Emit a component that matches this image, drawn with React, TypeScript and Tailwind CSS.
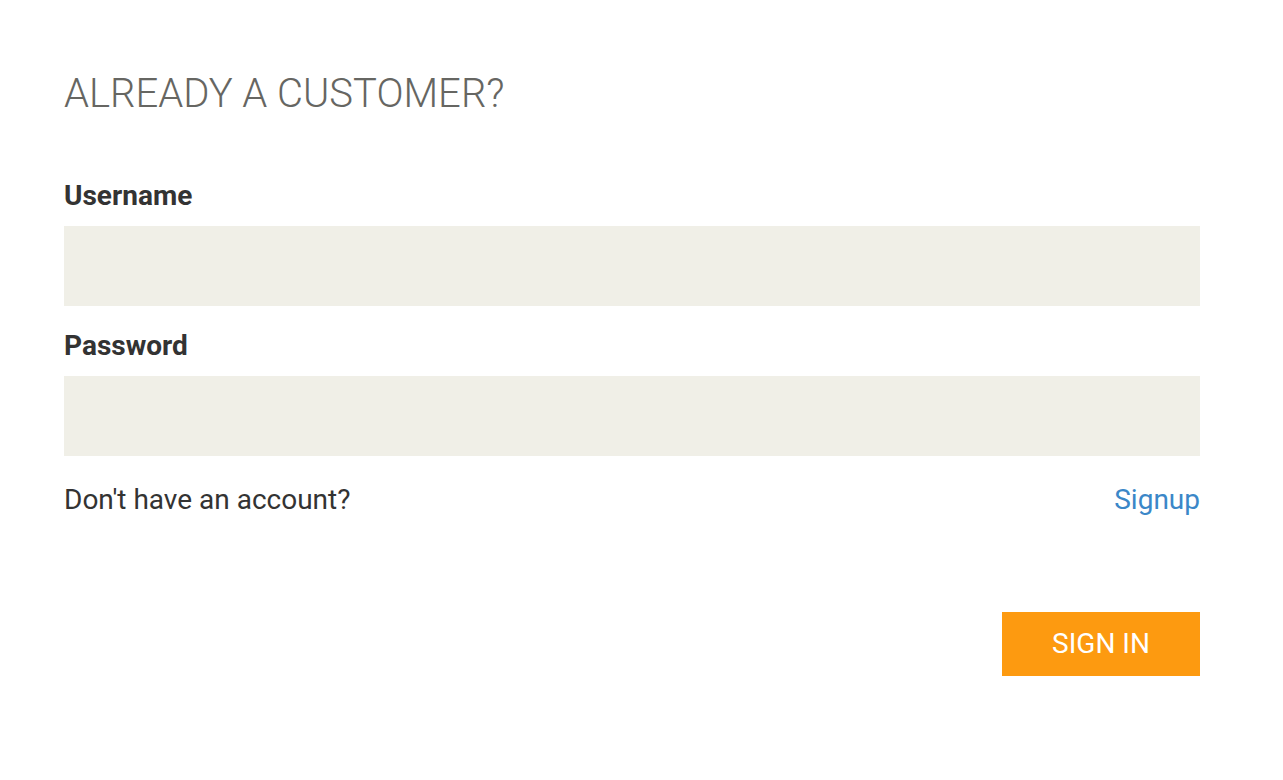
export default function App() {
  return (
    <div className="min-h-screen bg-white" style={{ fontFamily: "Roboto, 'Liberation Sans', sans-serif" }}>
      <div className="pl-16 pt-[70px] w-[1200px]">
        <h1 className="text-[40px] leading-[48px] font-light text-[#666662]">ALREADY A CUSTOMER?</h1>
        <label className="block mt-[62px] text-[28px] leading-[32px] font-bold text-[#333333]">Username</label>
        <input type="text" className="block mt-[14px] w-full h-20 bg-[#f0efe7] outline-none border-0" />
        <label className="block mt-[24px] text-[28px] leading-[32px] font-bold text-[#333333]">Password</label>
        <input type="password" className="block mt-[14px] w-full h-20 bg-[#f0efe7] outline-none border-0" />
        <div className="mt-[26px] flex justify-between text-[28px] leading-[36px]">
          <span className="text-[#333333]">Don't have an account?</span>
          <a href="#" className="text-[#3b87c8]">Signup</a>
        </div>
        <div className="mt-[94px] flex justify-end">
          <button className="w-[198px] h-16 bg-[#fd9a10] text-white text-[28px] leading-[36px]">SIGN IN</button>
        </div>
      </div>
    </div>
  );
}
